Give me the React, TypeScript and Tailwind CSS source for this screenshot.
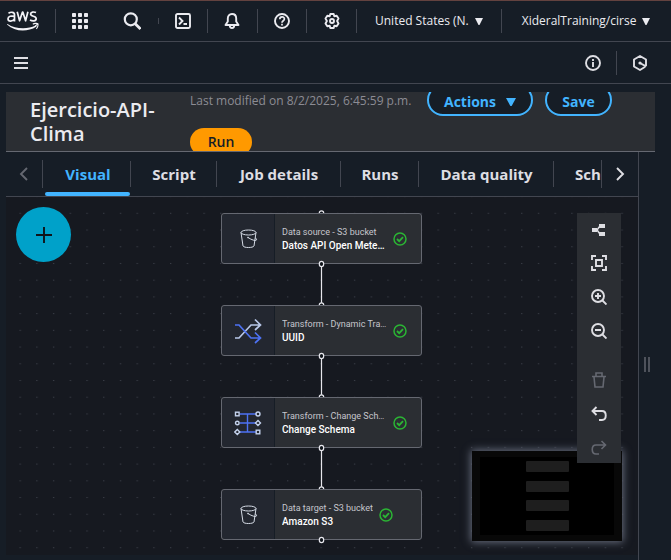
import type { ReactNode } from "react";

const bar = "w-px shrink-0 bg-[#424650]";

function IconButton({ label, className = "", disabled = false, children }: { label: string; className?: string; disabled?: boolean; children: ReactNode }) {
  return (
    <button type="button" aria-label={label} disabled={disabled} className={`flex shrink-0 items-center justify-center ${className}`}>
      {children}
    </button>
  );
}

function Glyph({ children, className = "size-4" }: { children: ReactNode; className?: string }) {
  return (
    <svg viewBox="0 0 16 16" className={className} fill="none" stroke="currentColor" strokeWidth="1.9" aria-hidden="true">
      {children}
    </svg>
  );
}

function Caret({ className = "h-[7px] w-2" }: { className?: string }) {
  return (
    <svg viewBox="0 0 8 7" className={className} fill="currentColor" preserveAspectRatio="none" aria-hidden="true">
      <path d="M0 0h8L4.500 7h-1z" />
    </svg>
  );
}

function AwsLogo() {
  return (
    <svg viewBox="0 0 32 20" className="h-5 w-8" aria-hidden="true">
      <g fill="none" stroke="#f3f3f7" strokeWidth="1.7">
        <path d="M1.500 2.200C3.500.9 7.500.6 7.500 3.800v6.700M7.500 5.300C4.500 4.700 1 5 1 7.800c0 3.200 5 3.100 6.500.1" />
        <path d="M10.200.8l2.400 9 2.800-8.600h.5l2.700 8.600 2.300-9" strokeLinejoin="round" />
        <path d="M29 1.600C27 .6 23.600.8 23.600 3c0 2.900 5.600 1.700 5.600 4.700 0 2.600-4 2.600-6.200 1.300" />
      </g>
      <path d="M.5 13c8 5.300 20 5.600 28 1.600 1-.4 1.600.4.7 1.100C20.500 21.200 7.500 20.700.3 13.700c-.4-.5-.2-.9.2-.7z" fill="#f3f3f7" />
      <path d="M25.800 13.200c1.500-1 4.600-1 5.100-.5.500.7-.2 3.900-1.600 5.100M30.600 12.900l-2.800 2.800" fill="none" stroke="#f3f3f7" strokeWidth="1.100" />
    </svg>
  );
}

function TopBar() {
  return (
    <header className="flex h-[42px] shrink-0 items-center border-t border-b border-t-[#63423f] border-b-[#424650] text-[#ebebf0]">
      <a href="#home" aria-label="AWS home" className="ml-[7px] w-12 shrink-0"><AwsLogo /></a>
      <span className={`${bar} h-6`} />
      <IconButton label="Services" className="w-12">
        <svg viewBox="0 0 16 16" className="size-4" fill="currentColor" aria-hidden="true">
          {[0, 6, 12].map((y) => [0, 6, 12].map((x) => <rect key={`${x}-${y}`} x={x} y={y} width="4" height="4" rx=".8" />))}
        </svg>
      </IconButton>
      <IconButton label="Search" className="ml-1 w-12">
        <svg viewBox="0 0 18 18" className="size-[18px]" fill="none" stroke="currentColor" strokeWidth="2.200" aria-hidden="true">
          <circle cx="7.800" cy="7.300" r="6" /><path d="M12.200 11.700L17.500 17" strokeWidth="2.800" />
        </svg>
      </IconButton>
      <span className={`${bar} ml-0.5 h-1.5`} />
      <IconButton label="CloudShell" className="w-12">
        <Glyph><rect x="1" y="1" width="14" height="14" rx="1.500" /><path d="M4 4.500L7.500 8 4 11.500M8.500 11H12" /></Glyph>
      </IconButton>
      <span className={`${bar} h-6`} />
      <IconButton label="Notifications" className="w-[49px] pr-px">
        <Glyph><path d="M8 1C5.200 1 3.800 3 3.800 5.500v3L1.500 12h13l-2.300-3.500v-3C12.200 3 10.800 1 8 1zM5.800 12.500c0 3.300 4.400 3.300 4.400 0" strokeLinejoin="round" /></Glyph>
      </IconButton>
      <span className={`${bar} h-6`} />
      <IconButton label="Help" className="w-12">
        <Glyph><circle cx="8" cy="8" r="7" /><path d="M5.800 6.300c0-3.200 4.600-3 4.600-.3C10.400 7.800 8 7.700 8 9.700M8 10.700v1.700" strokeWidth="1.700" /></Glyph>
      </IconButton>
      <span className={`${bar} h-6`} />
      <IconButton label="Settings" className="w-[49px]">
        <Glyph><path d="M6.300 1h3.400l.6 2.200 2.400-.5 1.800 2.900L13.100 8l1.400 2.400-1.800 2.900-2.400-.5-.6 2.200H6.300l-.6-2.200-2.400.5-1.800-2.900L2.900 8 1.500 5.600l1.800-2.900 2.400.5z" strokeLinejoin="round" /><circle cx="8" cy="8" r="2" /></Glyph>
      </IconButton>
      <span className={`${bar} h-6`} />
      <button type="button" className="ml-[18px] flex shrink-0 items-center gap-1.5 text-xs whitespace-nowrap">United States (N. <Caret /></button>
      <span className={`${bar} ml-[18px] h-6`} />
      <button type="button" className="ml-5 flex shrink-0 items-center gap-1.5 text-xs whitespace-nowrap">XideralTraining/cirse <Caret /></button>
    </header>
  );
}

function SubBar() {
  return (
    <nav aria-label="Service" className="flex h-[42px] shrink-0 items-center border-b border-[#424650] text-[#dedee3]">
      <IconButton label="Open navigation" className="ml-[13px]">
        <svg viewBox="0 0 16 16" className="size-4" fill="none" stroke="currentColor" strokeWidth="2" aria-hidden="true"><path d="M1 3h14M1 8h14M1 13h14" /></svg>
      </IconButton>
      <IconButton label="Info" className="ml-auto w-[46px]">
        <Glyph><circle cx="8" cy="8" r="7" /><path d="M8 7v5M8 4v2" /></Glyph>
      </IconButton>
      <span className={`${bar} h-6`} />
      <IconButton label="Amazon Q" className="mr-2 w-[46px]">
        <Glyph><path d="M13.200 11.800L8 15l-6-3.500v-7L8 1l6 3.500v6.700" strokeLinejoin="round" /><path d="M14 11.300L8 8" /><circle cx="8" cy="8" r="1.600" fill="currentColor" stroke="none" /></Glyph>
      </IconButton>
    </nav>
  );
}

function JobHeader() {
  const outlined = "flex h-8 shrink-0 items-center justify-center rounded-2xl border-2 border-[#42b4ff] bg-[#161d26] pt-1 text-sm font-bold text-[#42b4ff]";
  return (
    <section className="ml-1.5 mr-4 flex h-[60px] shrink-0 items-start overflow-hidden border-b border-[#656871] bg-[#2b2e33]">
      <h1 className="ml-6 mt-1.5 w-40 shrink-0 text-xl leading-6 font-semibold text-[#ebebf0]">Ejercicio-API-Clima</h1>
      <div className="flex w-[237px] shrink-0 flex-col items-start">
        <p className="h-9 text-xs leading-[18px] whitespace-nowrap text-[#8c8c94]">Last modified on 8/2/2025, 6:45:59 p.m.</p>
        <button type="button" className="h-7 w-[62px] shrink-0 rounded-2xl bg-[#ff9900] text-sm font-semibold text-[#161d26]">Run</button>
      </div>
      <div className="-mt-2 flex shrink-0 gap-3">
        <button type="button" className={`${outlined} w-[106px] gap-2.5`}>Actions <Caret className="h-2 w-2.5" /></button>
        <button type="button" className={`${outlined} w-[67px]`}>Save</button>
      </div>
    </section>
  );
}

const tabs = [
  { name: "Visual", width: "w-[86px]" },
  { name: "Script", width: "w-[86px]" },
  { name: "Job details", width: "w-[124px]" },
  { name: "Runs", width: "w-[78px]" },
  { name: "Data quality", width: "w-[135px]" },
];

function Tabs() {
  return (
    <div className="flex h-[45px] shrink-0 items-stretch border-b border-[#424650] text-[#dedee3]">
      <IconButton label="Scroll tabs left" disabled className="w-9 text-[#656871]">
        <Glyph><path d="M11 2L5 8l6 6" /></Glyph>
      </IconButton>
      <span className={`${bar} mt-2 h-7`} />
      <div role="tablist" className="ml-0.5 flex min-w-0 flex-1 overflow-hidden">
        {tabs.map((tab, i) => (
          <button
            key={tab.name}
            type="button"
            role="tab"
            aria-selected={i === 0}
            className={`${tab.width} relative flex shrink-0 items-center justify-center text-[15px] font-bold whitespace-nowrap ${i === 0 ? "text-[#42b4ff]" : ""}`}
          >
            {tab.name}
            <span className="absolute top-[9px] right-0 h-[26px] w-px bg-[#424650]" />
            {i === 0 && <span className="absolute right-px bottom-0 left-0 h-1 rounded-sm bg-[#42b4ff]" />}
          </button>
        ))}
        <button type="button" role="tab" aria-selected={false} className="shrink-0 px-[21px] text-[15px] font-bold">Schedules</button>
      </div>
      <span className={`${bar} mt-2 h-7`} />
      <IconButton label="Scroll tabs right" className="w-9">
        <Glyph><path d="M5 2l6 6-6 6" /></Glyph>
      </IconButton>
    </div>
  );
}

function BucketIcon() {
  return (
    <svg viewBox="0 0 18 20" className="ml-0.5 h-5 w-[18px]" fill="none" stroke="#d5dbe5" aria-hidden="true">
      <ellipse cx="8.500" cy="3.500" rx="7.500" ry="2.500" /><path d="M1 3.500l2 13.500c1 2 10 2 11 0l2-13.500M8 8.500c4 2.700 9 4.200 8.500 1.700-.2-.8-1-1.300-1.500-1.500" />
      <circle cx="8" cy="8.500" r=".5" />
    </svg>
  );
}

function ShuffleIcon() {
  return (
    <svg viewBox="0 0 28 26" className="h-[26px] w-7" fill="none" strokeWidth="1.700" aria-hidden="true">
      <path d="M1 20h4L17 7h9M21 1.500L26.500 7 21 12" stroke="#b8c7e8" />
      <path d="M1 7h4l12 13h9M21 14.500l5.500 5.500-5.500 5" stroke="#4d72f3" />
    </svg>
  );
}

function SchemaIcon() {
  return (
    <svg viewBox="0 0 28 26" className="h-[26px] w-7" fill="none" strokeWidth="1.400" aria-hidden="true">
      <path d="M6 4h16M6 13h16M6 22h16M13.500 4v18" stroke="#4d72f3" />
      <g stroke="#c5d3ee">
        <rect x="1.500" y="2.200" width="3.600" height="3.600" /><circle cx="3.300" cy="13" r="1.800" /><path d="M3.300 19.500L5.800 22l-2.500 2.500L.8 22z" />
        <circle cx="24" cy="4" r="2" /><path d="M24 10.500l2.500 2.500-2.500 2.500-2.500-2.500z" /><rect x="22.200" y="20.200" width="3.600" height="3.600" />
      </g>
    </svg>
  );
}

const nodes = [
  { kind: "Data source - S3 bucket", name: "Datos API Open Meteo Clima", icon: <BucketIcon />, top: "top-[16px]" },
  { kind: "Transform - Dynamic Transform", name: "UUID", icon: <ShuffleIcon />, top: "top-[108px]" },
  { kind: "Transform - Change Schema", name: "Change Schema", icon: <SchemaIcon />, top: "top-[200px]" },
  { kind: "Data target - S3 bucket", name: "Amazon S3", icon: <BucketIcon />, top: "top-[292px]" },
];

function Diagram() {
  return (
    <>
      <svg className="absolute inset-0 size-full" aria-hidden="true">
        <defs>
          <pattern id="dots" width="16.720" height="16.720" x="13.500" y="15.800" patternUnits="userSpaceOnUse"><rect width="1.300" height="1" fill="#3a3e47" /></pattern>
        </defs>
        <rect width="100%" height="100%" fill="url(#dots)" />
        <g fill="#0f141a" stroke="#e6e6ec" strokeWidth="1.200">
          <path d="M315.500 67v41M315.500 159v41M315.500 251v41" />
          {[16, 108, 200, 292].map((y) => <circle key={y} cx="315.500" cy={y} r="2.200" />)}
        </g>
      </svg>
      {nodes.map((node) => (
        <article key={node.name} className={`absolute left-[215px] flex h-[51px] w-[201px] items-stretch rounded-[3px] border border-[#656871] bg-[#2b2e33] ${node.top}`}>
          <div className="flex w-[53px] shrink-0 items-center justify-center rounded-l-sm border-r border-[#161d26] bg-[#232730]">{node.icon}</div>
          <div className="ml-[7px] flex max-w-[105px] min-w-0 flex-col justify-center font-[Roboto,'Open_Sans',sans-serif]">
            <span className="truncate text-[9px] leading-[14px] text-[#c6c6cd]">{node.kind}</span>
            <span className="truncate text-[10px] leading-[14px] font-medium text-white">{node.name}</span>
          </div>
          <svg viewBox="0 0 14 14" className="ml-1.5 size-3.5 shrink-0 self-center" fill="none" stroke="#2bb534" strokeWidth="1.500" aria-label="Valid">
            <circle cx="7" cy="7" r="6" /><path d="M4 7l2.200 2.200L10 5.200" strokeWidth="1.800" />
          </svg>
        </article>
      ))}
      <svg className="pointer-events-none absolute inset-0 size-full" fill="#0f141a" stroke="#e6e6ec" strokeWidth="1.200" aria-hidden="true">
        {[67, 159, 251, 343].map((y) => <ellipse key={y} cx="315.500" cy={y} rx="2.200" ry="2.600" />)}
      </svg>
    </>
  );
}

function Minimap() {
  return (
    <div className="absolute right-4 bottom-[14px] h-[90px] w-[150px] bg-[#080808] px-2 py-1.5 shadow-[0_0_8px_1px_#6a7080]">
      <div className="flex h-full flex-col items-center justify-around bg-black">
        {nodes.map((node) => <span key={node.name} className="h-[11px] w-[43px] rounded-[1px] bg-[#1e1e1e]" />)}
      </div>
    </div>
  );
}

function Toolbar() {
  return (
    <div role="toolbar" aria-label="Canvas tools" className="absolute top-4 right-[17px] flex h-[250px] w-11 flex-col bg-[#2b2e33] text-[#dedee3]">
      <IconButton label="Auto layout" className="h-[33px]">
        <Glyph><path d="M3 8h3l3-4M6 8l3 4" strokeWidth="1.500" /><path d="M1 6h5v4H1zM8 2h6v4H8zM8 10h6v4H8z" fill="currentColor" stroke="none" /></Glyph>
      </IconButton>
      <IconButton label="Fit to screen" className="h-[34px]">
        <Glyph><path d="M1 5V1h4M11 1h4v4M15 11v4h-4M5 15H1v-4M5 5h6v6H5z" /></Glyph>
      </IconButton>
      <IconButton label="Zoom in" className="h-[34px]">
        <Glyph><circle cx="7" cy="7" r="6" /><path d="M11.500 11.500l4 4M7 4v6M4 7h6" /></Glyph>
      </IconButton>
      <IconButton label="Zoom out" className="h-[34px]">
        <Glyph><circle cx="7" cy="7" r="6" /><path d="M11.500 11.500l4 4M4 7h6" /></Glyph>
      </IconButton>
      <IconButton label="Delete" disabled className="mt-[15px] h-[34px] text-[#656871]">
        <Glyph><path d="M1 4.500h14M5 4V1h6v3M3 5l1 10h8l1-10" strokeWidth="1.600" /></Glyph>
      </IconButton>
      <IconButton label="Undo" className="h-[34px]">
        <Glyph><path d="M5.500 1L1.500 5l4 4M1.500 5H11c5 0 5 9 0 9H8" /></Glyph>
      </IconButton>
      <IconButton label="Redo" disabled className="h-[34px] text-[#656871]">
        <Glyph><path d="M10.500 1l4 4-4 4M14.500 5H5c-5 0-5 9 0 9h3" strokeWidth="1.600" /></Glyph>
      </IconButton>
    </div>
  );
}

export default function App() {
  return (
    <div className="flex h-screen min-h-[560px] flex-col overflow-hidden bg-[#161d26] font-['Open_Sans','Noto_Sans',sans-serif]">
      <TopBar />
      <SubBar />
      <main className="flex min-h-0 flex-1 flex-col pt-2">
        <JobHeader />
        <div className="flex min-h-0 flex-1 pl-1.5">
          <div className="flex min-w-0 flex-1 flex-col border-r border-[#424650]">
            <Tabs />
            <div className="relative mb-[5px] min-h-0 flex-1 overflow-hidden bg-[#161920]">
              <Diagram />
              <button type="button" aria-label="Add node" className="absolute top-[10px] left-[10px] flex size-[55px] items-center justify-center rounded-full bg-[#00a1c9] text-[#0f141a]">
                <Glyph><path d="M8 0v16M0 8h16" /></Glyph>
              </button>
              <Minimap />
              <Toolbar />
            </div>
          </div>
          <div role="separator" aria-orientation="vertical" className="flex w-8 shrink-0 items-center gap-0.5 pt-4 pl-[5px]">
            <span className="h-[15px] w-0.5 bg-[#4e525b]" />
            <span className="h-[15px] w-0.5 bg-[#4e525b]" />
          </div>
        </div>
      </main>
    </div>
  );
}
